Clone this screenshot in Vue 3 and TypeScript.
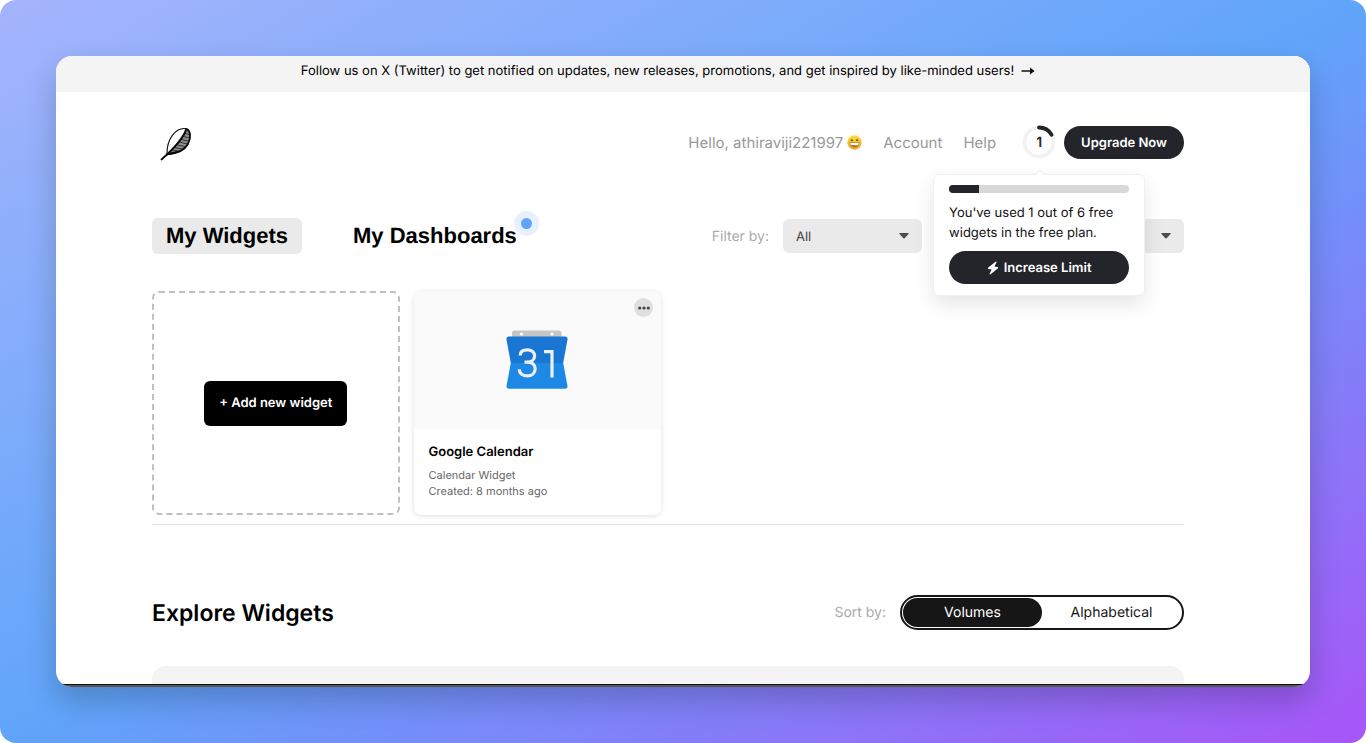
<script setup lang="ts">
import { computed, ref } from 'vue'

type SortMode = 'Volumes' | 'Alphabetical'

const used = ref(1)
const limit = ref(6)
const tab = ref<'widgets' | 'dashboards'>('widgets')
const sortMode = ref<SortMode>('Volumes')
const sortModes: SortMode[] = ['Volumes', 'Alphabetical']
const typeFilter = ref('All')
const groupFilter = ref('All')

const usedPercent = computed(() => (used.value / limit.value) * 100)
</script>

<template>
  <div class="stage">
    <div class="window">
      <div class="page">
        <div class="banner">
          <a href="#follow" class="banner-link">
            <span>Follow us on X (Twitter) to get notified on updates, new releases, promotions, and get inspired by like-minded users!</span>
            <svg width="14" height="10" viewBox="0 0 14 10" aria-hidden="true">
              <path d="M0.5 5H12.5" stroke="#111" stroke-width="1.5" />
              <path d="M9 1.6L13.6 5L9 8.4Z" fill="#111" />
            </svg>
          </a>
        </div>

        <div class="content">
          <header class="header">
            <a href="#home" class="logo" aria-label="Home">
              <svg width="32" height="34" viewBox="0 0 32 34" fill="none" stroke="#0a0a0a" stroke-linecap="round">
                <path d="M26.500 2C30.500 4.500 31 11 28 17C24.500 23.500 17 26.500 7 27.500L13 21Z" fill="#8d8d8d" stroke="none" />
                <path d="M7 27.500C6.500 13 15 0.500 25.500 1.500C31 2 31.500 11 28 17C24.500 23.500 17 26.500 7 27.500Z" stroke-width="1.100" />
                <path d="M26 2C30.500 3.500 31.300 10.500 28 17C24.500 23.500 17 26.500 7.500 27.200" stroke-width="1.600" />
                <path d="M26 2.500C24.500 9 18 17 7 27.500" stroke-width="1.900" />
                <path d="M7 27.500C10 25.500 13 25.200 17 24.800L12 26.800Z" fill="#0a0a0a" stroke-width="1" />
                <path d="M7.500 27L1.500 32.500" stroke-width="1.800" />
                <path d="M25 6.500L29.500 7.500M23.500 9.500L29.300 11M21.500 12.500L28.500 14.200M19.500 15L27.300 17M17 17.800L25.500 19.800M14.500 20.500L23 22.200M12 23L19.500 24.200" stroke-width="0.700" />
              </svg>
            </a>
            <nav class="nav">
              <span class="hello">
                Hello, athiraviji221997
                <svg width="15" height="15" viewBox="0 0 15 15" role="img" aria-label="grinning face">
                  <defs>
                    <linearGradient id="face" x1="0" y1="0" x2="0" y2="1">
                      <stop offset="0" stop-color="#ffe03a" />
                      <stop offset="1" stop-color="#f0a31d" />
                    </linearGradient>
                  </defs>
                  <circle cx="7.500" cy="7.500" r="7.200" fill="url(#face)" />
                  <path d="M3.800 5.700Q4.800 4 5.800 5.700M9.200 5.700Q10.200 4 11.200 5.700" stroke="#6b4310" stroke-width="1.100" fill="none" />
                  <path d="M2.500 7.500H12.500Q12 12.200 7.500 12.200Q3 12.200 2.500 7.500Z" fill="#a06a22" />
                  <path d="M3.200 8H11.800Q11.500 10 10.800 10.300H4.200Q3.500 10 3.200 8Z" fill="#fff" />
                </svg>
              </span>
              <a href="#account" class="nav-link">Account</a>
              <a href="#help" class="nav-link">Help</a>
              <div class="usage">
                <button type="button" class="ring" aria-label="Widgets used: 1">
                  <svg width="34" height="34" viewBox="0 0 34 34" aria-hidden="true">
                    <circle cx="17" cy="17" r="14.500" fill="none" stroke="#f2f2f2" stroke-width="3.600" />
                    <path d="M17 2.500A14.500 14.500 0 0 1 29.560 9.750" fill="none" stroke="#24252b" stroke-width="3.800" stroke-linecap="round" />
                  </svg>
                  <span class="ring-count">{{ used }}</span>
                </button>
                <div class="popover">
                  <div class="meter" role="progressbar" aria-label="Free widgets used" :aria-valuenow="used" aria-valuemin="0" :aria-valuemax="limit">
                    <div class="meter-fill" :style="{ width: usedPercent + '%' }"></div>
                  </div>
                  <p class="popover-text">You've used {{ used }} out of {{ limit }} free widgets in the free plan.</p>
                  <button type="button" class="pill wide">
                    <svg width="12" height="14" viewBox="0 0 12 14" aria-hidden="true">
                      <path d="M8.800 0.500L1 6.800Q0.400 7.600 1.300 7.900L4.600 8.400L2.600 12.800Q2.700 13.700 3.600 13.300L11 7.300Q11.700 6.300 10.700 6L7.400 5.500L9.500 1.300Q9.600 0.400 8.800 0.500Z" fill="#fff" />
                    </svg>
                    Increase Limit
                  </button>
                </div>
              </div>
              <button type="button" class="pill">Upgrade Now</button>
            </nav>
          </header>

          <div class="toolbar">
            <div class="tabs">
              <button type="button" class="tab" :class="{ active: tab === 'widgets' }" @click="tab = 'widgets'">My Widgets</button>
              <button type="button" class="tab" :class="{ active: tab === 'dashboards' }" @click="tab = 'dashboards'">
                My Dashboards
                <span class="dot"></span>
              </button>
            </div>
            <div class="filters">
              <label for="type-filter" class="muted">Filter by:</label>
              <div class="select">
                <select id="type-filter" v-model="typeFilter">
                  <option>All</option>
                </select>
                <svg class="caret" width="10" height="6" viewBox="0 0 10 6" aria-hidden="true">
                  <path d="M0.800 0H9.200Q10.200 0.200 9.500 1L5.600 5.300Q5 5.900 4.400 5.300L0.500 1Q-0.200 0.200 0.800 0Z" fill="#4c4c4c" />
                </svg>
              </div>
              <div class="select second">
                <select v-model="groupFilter" aria-label="Group">
                  <option>All</option>
                </select>
                <svg class="caret" width="10" height="6" viewBox="0 0 10 6" aria-hidden="true">
                  <path d="M0.800 0H9.200Q10.200 0.200 9.500 1L5.600 5.300Q5 5.900 4.400 5.300L0.500 1Q-0.200 0.200 0.800 0Z" fill="#4c4c4c" />
                </svg>
              </div>
            </div>
          </div>

          <section class="cards">
            <div class="add-card">
              <button type="button" class="add-button">+ Add new widget</button>
            </div>
            <article class="card">
              <div class="preview">
                <svg width="62" height="60" viewBox="0 0 62 60" role="img" aria-label="Calendar, 31">
                  <path d="M6 7V3Q6 0.500 8.500 0.500H53Q55.500 0.500 55.500 3V7Z" fill="#c5c5c5" />
                  <circle cx="15.500" cy="4" r="1.600" fill="#fff" />
                  <circle cx="46" cy="4" r="1.600" fill="#fff" />
                  <path d="M2.500 6.500H59.500Q62 6.800 61.500 9.500L57.200 33H4.800L0.500 9.500Q0 6.800 2.500 6.500Z" fill="#1976d2" />
                  <path d="M4.800 33H57.200L61.500 56Q61.800 58.500 59.500 58.800H2.500Q0.200 58.500 0.500 56Z" fill="#1e88e5" />
                  <path d="M14.200 25.500C14.200 21.500 17.200 19.900 21.200 19.900C25.600 19.900 28.600 22.200 28.600 26C28.600 30 25.200 32.100 21 32.100H18.500M21 32.100C26 32.100 29.200 34.600 29.200 38.700C29.200 43.200 25.600 45.900 21.300 45.900C17 45.900 13.300 43.500 13.300 39.300M38 21.600H46V47.500" fill="none" stroke="#eceff3" stroke-width="3.200" />
                </svg>
                <button type="button" class="more" aria-label="More options">
                  <svg width="12" height="4" viewBox="0 0 12 4" aria-hidden="true">
                    <circle cx="1.700" cy="2" r="1.600" fill="#444" />
                    <circle cx="6" cy="2" r="1.600" fill="#444" />
                    <circle cx="10.300" cy="2" r="1.600" fill="#444" />
                  </svg>
                </button>
              </div>
              <div class="card-body">
                <h3>Google Calendar</h3>
                <p>Calendar Widget</p>
                <p>Created: 8 months ago</p>
              </div>
            </article>
          </section>

          <section class="explore">
            <h2>Explore Widgets</h2>
            <div class="sort">
              <span id="sort-label" class="muted">Sort by:</span>
              <div class="switch" role="group" aria-labelledby="sort-label">
                <button
                  v-for="mode in sortModes"
                  :key="mode"
                  type="button"
                  class="switch-option"
                  :class="{ on: sortMode === mode }"
                  :aria-pressed="sortMode === mode"
                  @click="sortMode = mode"
                >{{ mode }}</button>
              </div>
            </div>
          </section>
          <div class="panel"></div>
        </div>
      </div>
      <div class="edge"></div>
    </div>
  </div>
</template>

<style>
body {
  background: #fff;
}
</style>

<style scoped>
.stage,
.stage * {
  box-sizing: border-box;
}

.stage {
  height: 100vh;
  padding: 56px;
  border-radius: 16px;
  background: linear-gradient(to bottom right, #a5b4fc, #60a5fa 50%, #a855f7);
  font-family: Inter, "Liberation Sans", sans-serif;
  color: #000;
  text-rendering: geometricPrecision;
}

button,
select {
  font-family: inherit;
  text-rendering: inherit;
  border: 0;
  margin: 0;
  cursor: pointer;
}

a {
  color: inherit;
  text-decoration: none;
}

h2,
h3,
p {
  margin: 0;
}

.window {
  height: 100%;
  display: flex;
  flex-direction: column;
  border-radius: 16px;
  overflow: hidden;
  background: #fff;
  box-shadow: 0 14px 30px rgba(0, 0, 0, 0.2);
}

.page {
  flex: 1;
  min-height: 0;
  overflow: hidden;
}

.edge {
  height: 3px;
  background: #555;
  border-top: 1px solid #111;
}

.banner {
  height: 36px;
  padding: 4px 30px 0 0;
  background: #f4f4f4;
  display: flex;
  justify-content: center;
}

.banner-link {
  display: flex;
  align-items: center;
  gap: 7px;
  height: 21px;
  font-size: 13px;
  font-weight: 400;
  color: #000;
  white-space: nowrap;
}

.content {
  padding: 33px 126px 0 96px;
}

.header {
  height: 34px;
  display: flex;
  align-items: center;
  justify-content: space-between;
}

.logo {
  margin: 3px 0 0 8px;
  height: 34px;
}

.logo svg,
.ring svg,
.preview svg {
  display: block;
}

.nav {
  display: flex;
  align-items: center;
  font-size: 15px;
  color: #999;
  white-space: nowrap;
}

.hello {
  display: flex;
  align-items: center;
  gap: 4px;
}

.nav-link {
  margin-left: 21px;
}

.usage {
  position: relative;
  margin: 0 8px 0 26px;
}

.ring {
  display: grid;
  place-items: center;
  padding: 0;
  background: none;
  color: #24252b;
}

.ring > * {
  grid-area: 1 / 1;
}

.ring-count {
  font-size: 14px;
  font-weight: 600;
}

.pill {
  height: 33px;
  padding: 1px 17px 0;
  border-radius: 17px;
  background: #24252b;
  color: #fff;
  font-size: 13px;
  font-weight: 600;
  display: flex;
  align-items: center;
  justify-content: center;
  gap: 5px;
}

.pill.wide {
  width: 100%;
}

.popover {
  position: absolute;
  z-index: 2;
  top: 49px;
  left: 50%;
  width: 212px;
  margin-left: -106px;
  padding: 10px 15px 11px;
  border: 1px solid #f0f0f0;
  border-radius: 6px;
  background: #fff;
  box-shadow: 0 8px 20px rgba(0, 0, 0, 0.1);
  white-space: normal;
}

.popover::before {
  content: "";
  position: absolute;
  top: -4px;
  left: 102px;
  width: 6px;
  height: 6px;
  background: #fff;
  border: 1px solid #f0f0f0;
  border-width: 1px 0 0 1px;
  transform: rotate(45deg);
}

.meter {
  height: 8px;
  border-radius: 4px;
  background: #d8d8d8;
  overflow: hidden;
}

.meter-fill {
  height: 100%;
  background: #24252b;
}

.popover-text {
  margin: 10px 0 8px;
  font-size: 13px;
  line-height: 20px;
  color: #111;
}

.toolbar {
  margin-top: 59px;
  display: flex;
  align-items: center;
  justify-content: space-between;
}

.tabs {
  display: flex;
  gap: 37px;
}

.tab {
  position: relative;
  height: 36px;
  padding: 0 14px;
  border-radius: 6px;
  background: none;
  font-family: "Liberation Sans", Arial, sans-serif;
  font-size: 22px;
  font-weight: 700;
  color: #000;
}

.tab.active {
  background: #eaeaea;
}

.dot {
  position: absolute;
  top: -7px;
  right: -8px;
  width: 25px;
  height: 25px;
  border: 7px solid #e6f0fe;
  border-radius: 50%;
  background: #60a5fa;
}

.filters {
  display: flex;
  align-items: center;
}

.muted {
  font-size: 14px;
  color: #aaa;
  margin-right: 14px;
}

.select {
  display: grid;
  align-items: center;
  width: 139px;
}

.select > * {
  grid-area: 1 / 1;
}

.select.second {
  margin-left: 123px;
}

select {
  appearance: none;
  width: 100%;
  height: 34px;
  padding: 1px 13px 0;
  border-radius: 6px;
  background: #eaeaea;
  font-size: 13px;
  color: #444;
}

.caret {
  justify-self: end;
  margin-right: 13px;
  pointer-events: none;
}

.cards {
  margin-top: 37px;
  padding-bottom: 9px;
  border-bottom: 1px solid #e4e4e4;
  display: grid;
  grid-template-columns: repeat(4, 1fr);
  gap: 14px;
}

.add-card {
  display: flex;
  align-items: center;
  justify-content: center;
  border: 2px dashed #c0c0c0;
  border-radius: 7px;
}

.add-button {
  height: 45px;
  padding: 0 15px;
  border-radius: 6px;
  background: #000;
  color: #fff;
  font-size: 13px;
  font-weight: 600;
}

.card {
  border-radius: 7px;
  background: #fff;
  box-shadow: 0 1px 5px rgba(0, 0, 0, 0.13);
  overflow: hidden;
}

.preview {
  position: relative;
  height: 138px;
  background: #fafafa;
  display: flex;
  align-items: center;
  justify-content: center;
}

.more {
  position: absolute;
  top: 7px;
  right: 8px;
  width: 19px;
  height: 19px;
  padding: 0;
  border-radius: 50%;
  background: #dfdfdf;
  display: grid;
  place-items: center;
}

.card-body {
  padding: 14px 15px 16px;
}

.card-body h3 {
  font-size: 13px;
  line-height: 18px;
  font-weight: 600;
  margin-bottom: 6px;
}

.card-body p {
  font-size: 11px;
  line-height: 16px;
  color: #666;
}

.explore {
  margin-top: 70px;
  display: flex;
  align-items: center;
  justify-content: space-between;
}

.explore h2 {
  font-size: 23px;
  font-weight: 600;
}

.sort {
  display: flex;
  align-items: center;
}

.switch {
  display: flex;
  width: 284px;
  height: 35px;
  padding: 1px;
  border: 2px solid #161616;
  border-radius: 18px;
}

.switch-option {
  flex: 1;
  padding: 0;
  border-radius: 15px;
  background: none;
  font-size: 14px;
  color: #161616;
}

.switch-option.on {
  background: #161616;
  color: #fff;
}

.panel {
  margin-top: 36px;
  height: 300px;
  border-radius: 14px;
  background: #f4f4f4;
}
</style>
